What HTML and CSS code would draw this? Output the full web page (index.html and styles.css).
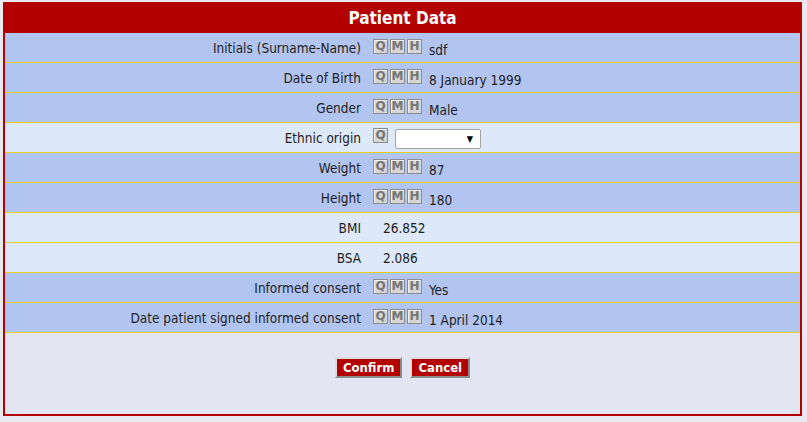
FILE: index.html
```html
<!DOCTYPE html>
<html>
<head>
<meta charset="utf-8">
<title>Patient Data</title>
<link rel="stylesheet" href="styles.css">
</head>
<body>
<div class="panel">
  <div class="title">Patient Data</div>
  <div class="rows">
    <div class="row blue">
      <div class="label">Initials (Surname-Name)</div>
      <div class="val"><span class="ic">Q</span><span class="ic">M</span><span class="ic">H</span><span class="txt">sdf</span></div>
    </div>
    <div class="row blue">
      <div class="label">Date of Birth</div>
      <div class="val"><span class="ic">Q</span><span class="ic">M</span><span class="ic">H</span><span class="txt">8 January 1999</span></div>
    </div>
    <div class="row blue">
      <div class="label">Gender</div>
      <div class="val"><span class="ic">Q</span><span class="ic">M</span><span class="ic">H</span><span class="txt">Male</span></div>
    </div>
    <div class="row light">
      <div class="label">Ethnic origin</div>
      <div class="val"><span class="ic ic-up">Q</span><span class="select"><span class="arrow">▼</span></span></div>
    </div>
    <div class="row blue">
      <div class="label">Weight</div>
      <div class="val"><span class="ic">Q</span><span class="ic">M</span><span class="ic">H</span><span class="txt">87</span></div>
    </div>
    <div class="row blue">
      <div class="label">Height</div>
      <div class="val"><span class="ic">Q</span><span class="ic">M</span><span class="ic">H</span><span class="txt">180</span></div>
    </div>
    <div class="row light">
      <div class="label">BMI</div>
      <div class="val"><span class="calc">26.852</span></div>
    </div>
    <div class="row light">
      <div class="label">BSA</div>
      <div class="val"><span class="calc">2.086</span></div>
    </div>
    <div class="row blue">
      <div class="label">Informed consent</div>
      <div class="val"><span class="ic">Q</span><span class="ic">M</span><span class="ic">H</span><span class="txt">Yes</span></div>
    </div>
    <div class="row blue">
      <div class="label">Date patient signed informed consent</div>
      <div class="val"><span class="ic">Q</span><span class="ic">M</span><span class="ic">H</span><span class="txt">1 April 2014</span></div>
    </div>
  </div>
  <div class="actions">
    <button class="btn">Confirm</button>
    <button class="btn">Cancel</button>
  </div>
</div>
</body>
</html>
```
FILE: styles.css
```css
html, body {
  margin: 0;
  padding: 0;
}
body {
  background: #e9e9f1;
  font-family: "DejaVu Sans Condensed", "DejaVu Sans", sans-serif;
  font-size: 13.5px;
  color: #1e1e1e;
  padding: 2px 0 0 3px;
  height: 420px;
  box-sizing: border-box;
}
.panel {
  width: 799px;
  height: 414px;
  box-sizing: border-box;
  border: 2px solid #b30000;
  background: #e3e5f3;
  display: flex;
  flex-direction: column;
}
.title {
  background: #b30000;
  color: #fff;
  font-weight: bold;
  font-size: 17px;
  text-align: center;
  height: 29px;
  line-height: 29px;
  margin: -2px -2px 0;
  padding-top: 2px;
}
.rows {
  display: flex;
  flex-direction: column;
}
.row {
  display: flex;
  align-items: center;
  height: 29px;
  border-bottom: 1px solid #e5d21e;
}
.row.blue { background: #b2c4f0; }
.row.light { background: #dde8f8; }
.label {
  width: 356px;
  text-align: right;
  flex: none;
}
.val {
  display: flex;
  align-items: center;
  margin-left: 12px;
}
.ic {
  width: 13px;
  height: 13px;
  border: 1px solid #8c8c8c;
  background: #d6d6d6;
  color: #777;
  font-family: "DejaVu Sans", sans-serif;
  font-weight: bold;
  font-size: 12px;
  line-height: 13px;
  text-align: center;
  margin-right: 2px;
  margin-top: -2px;
  box-shadow: inset 1px 1px 0 #eee;
}
.ic-up { margin-top: -4px; }
.txt {
  margin-left: 5px;
  margin-top: 4px;
}
.calc {
  margin-left: 10px;
}
.select {
  width: 84px;
  height: 18px;
  background: #fff;
  border: 1px solid #a5a5a5;
  border-radius: 2px;
  margin-left: 5px;
  margin-top: 2px;
  display: flex;
  align-items: center;
  justify-content: flex-end;
}
.arrow {
  font-size: 9px;
  color: #000;
  margin-right: 7px;
}
.actions {
  display: flex;
  justify-content: center;
  gap: 8px;
  padding-top: 24px;
}
.btn {
  background: #b30000;
  color: #fff;
  font-family: "DejaVu Sans Condensed", "DejaVu Sans", sans-serif;
  font-weight: bold;
  font-size: 13px;
  height: 21px;
  padding: 0 6px;
  border: 2px solid;
  border-color: #dcdcdc #8a8a8a #8a8a8a #dcdcdc;
  line-height: 16px;
  margin: 0;
}
```
